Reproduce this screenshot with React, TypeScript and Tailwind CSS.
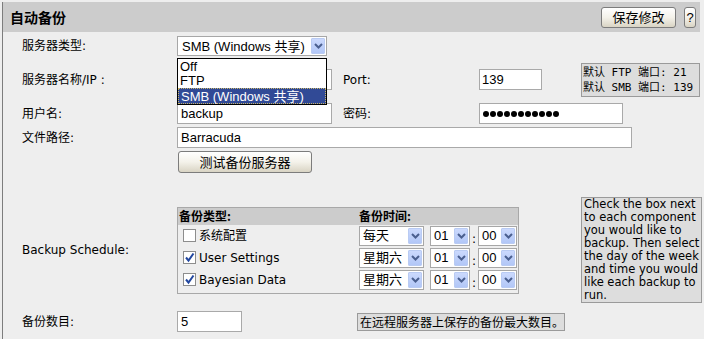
import React from "react";

const LBL = "font-['DejaVu_Sans','Noto_Sans_CJK_SC',sans-serif] text-[12px] text-black";
const INP = "font-['Liberation_Sans','Noto_Sans_CJK_SC',sans-serif] text-[13px] text-black";

function Chevron() {
  return (
    <svg width="9" height="6" viewBox="0 0 9 6">
      <path d="M1 1 L4.5 4.5 L8 1" stroke="#4a5f8f" strokeWidth="2" fill="none" />
    </svg>
  );
}

function Select({
  w,
  h,
  text,
  pl = "pl-[3px]",
}: {
  w: string;
  h: string;
  text: string;
  pl?: string;
}) {
  return (
    <div className={`${w} ${h} bg-white border border-[#a7a7a7] flex items-center justify-between pr-[1px] ${INP} leading-none`}>
      <span className={`${pl} whitespace-nowrap`}>{text}</span>
      <div className="w-[14px] h-[calc(100%-2px)] flex items-center justify-center bg-linear-to-b from-[#cbd9fd] to-[#b2c7f7] border border-[#b9cbf3] rounded-[1px]">
        <Chevron />
      </div>
    </div>
  );
}

function Input({ w, text, pl = "pl-[3px]" }: { w: string; text?: React.ReactNode; pl?: string }) {
  return (
    <div className={`${w} h-[21px] bg-white border border-[#a9a9a9] flex items-center ${pl} ${INP} leading-none`}>
      {text}
    </div>
  );
}

function Button({ w, h, children }: { w: string; h: string; children: React.ReactNode }) {
  return (
    <div
      className={`${w} ${h} flex items-center justify-center rounded-[3px] border border-[#7c7c7c] bg-linear-to-b from-[#ffffff] via-[#f4f2ea] to-[#d9d4c4] font-['Liberation_Sans','Noto_Sans_CJK_SC',sans-serif] text-[13px] text-black leading-none`}
    >
      {children}
    </div>
  );
}

function Checkbox({ checked }: { checked: boolean }) {
  return (
    <div className="w-[13px] h-[13px] bg-white border border-[#8d8d8d] flex items-center justify-center">
      {checked && (
        <svg width="11" height="11" viewBox="0 0 11 11">
          <path d="M2 5.5 L4.5 8.5 L9.5 1.5" stroke="#22479f" strokeWidth="2" fill="none" />
        </svg>
      )}
    </div>
  );
}

function Label({ children }: { children: React.ReactNode }) {
  return <div className={`w-[155px] shrink-0 ${LBL} whitespace-nowrap`}>{children}</div>;
}

function ScheduleRow({ checked, label, day }: { checked: boolean; label: string; day: string }) {
  return (
    <div className="h-[22px] flex items-center">
      <div className="w-[181px] flex items-center pl-[5px] gap-[3px]">
        <Checkbox checked={checked} />
        <span className={`${LBL} whitespace-nowrap`}>{label}</span>
      </div>
      <Select w="w-[65px]" h="h-[20px]" text={day} />
      <div className="w-[6px]" />
      <Select w="w-[40px]" h="h-[20px]" text="01" />
      <div className={`w-[8px] text-center ${LBL} self-end pb-[2px] leading-none`}>:</div>
      <Select w="w-[39px]" h="h-[20px]" text="00" />
    </div>
  );
}

export default function App() {
  return (
    <div className="w-[704px] h-[339px] bg-[#eeeeee] pt-[2px] pl-[2px] overflow-hidden">
      <div className="h-full border-l border-[#7d7d7d] flex flex-col">
        {/* header */}
        <div className="w-[697px] h-[30px] bg-[#cccccc] flex items-center justify-between pl-[7px] pr-[4px]">
          <div className="font-['Noto_Sans_CJK_SC',sans-serif] text-[14px] font-bold text-black">自动备份</div>
          <div className="flex items-center gap-[8px]">
            <Button w="w-[75px]" h="h-[21px]">保存修改</Button>
            <Button w="w-[12px]" h="h-[21px]">?</Button>
          </div>
        </div>

        <div className="pl-[19px] flex flex-col">
          {/* row 1 */}
          <div className="mt-[2px] h-[24px] flex items-center relative z-10">
            <Label>服务器类型:</Label>
            <div className="relative">
              <Select w="w-[150px]" h="h-[20px]" text="SMB (Windows 共享)" pl="pl-[4px]" />
              <div className={`absolute left-0 top-[22px] w-[150px] bg-white border border-black ${INP} leading-none`}>
                <div className="h-[14px] flex items-center pl-[2px]">Off</div>
                <div className="h-[15px] flex items-center pl-[2px]">FTP</div>
                <div className="h-[16px] flex items-center pl-[2px] bg-[#314a96] text-white border border-dotted border-[#c9b66a] whitespace-nowrap">
                  SMB (Windows 共享)
                </div>
              </div>
            </div>
          </div>

          {/* row 2 */}
          <div className="h-[43px] flex items-center">
            <Label>服务器名称/IP :</Label>
            <Input w="w-[155px]" />
            <div className={`ml-[11px] w-[136px] ${LBL}`}>Port:</div>
            <Input w="w-[63px]" text="139" pl="pl-[2px]" />
            <div className="ml-[39px] w-[119px] h-[34px] bg-[#dddddd] border border-[#9a9a9a] flex flex-col justify-center pl-[1px] font-['DejaVu_Sans_Mono','Noto_Sans_CJK_SC',monospace] text-[11px] leading-[15px] text-black whitespace-nowrap">
              <div>默认 FTP 端口: 21</div>
              <div>默认 SMB 端口: 139</div>
            </div>
          </div>

          {/* row 3 */}
          <div className="h-[25px] flex items-center">
            <Label>用户名:</Label>
            <Input w="w-[155px]" text="backup" />
            <div className={`ml-[11px] w-[136px] ${LBL}`}>密码:</div>
            <Input
              w="w-[144px]"
              pl="pl-[3px]"
              text={
                <div className="flex gap-[1px]">
                  {Array.from({ length: 11 }).map((_, i) => (
                    <div key={i} className="w-[6px] h-[6px] rounded-full bg-black" />
                  ))}
                </div>
              }
            />
          </div>

          {/* row 4 */}
          <div className="h-[23px] flex items-center">
            <Label>文件路径:</Label>
            <Input w="w-[455px]" text="Barracuda" />
          </div>

          {/* test button */}
          <div className="h-[26px] flex items-center">
            <div className="w-[156px]" />
            <Button w="w-[134px]" h="h-[22px]">测试备份服务器</Button>
          </div>

          {/* schedule */}
          <div className="mt-[20px] h-[110px] flex items-center">
            <Label>Backup Schedule:</Label>
            <div className="w-[342px] border border-[#a8a8a8] pb-[2px]">
              <div className="h-[17px] bg-[#cccccc] flex items-center font-['Noto_Sans_CJK_SC',sans-serif] text-[12px] font-bold text-black leading-none">
                <div className="w-[181px] pl-[1px]">备份类型:</div>
                <div>备份时间:</div>
              </div>
              <ScheduleRow checked={false} label="系统配置" day="每天" />
              <ScheduleRow checked={true} label="User Settings" day="星期六" />
              <ScheduleRow checked={true} label="Bayesian Data" day="星期六" />
            </div>
            <div className="ml-[62px] w-[121px] bg-[#dddddd] border border-[#9a9a9a] pl-[2px] font-['DejaVu_Sans',sans-serif] text-[11.5px] leading-[13px] text-black whitespace-nowrap">
              <div>Check the box next</div>
              <div>to each component</div>
              <div>you would like to</div>
              <div>backup. Then select</div>
              <div>the day of the week</div>
              <div>and time you would</div>
              <div>like each backup to</div>
              <div>run.</div>
            </div>
          </div>

          {/* last row */}
          <div className="h-[33px] flex items-center">
            <Label>备份数目:</Label>
            <Input w="w-[65px]" text="5" />
            <div className={`ml-[115px] w-[208px] h-[18px] bg-[#dddddd] border border-[#9a9a9a] flex items-center pl-[2px] font-['Noto_Sans_CJK_SC',sans-serif] text-[12px] text-black leading-none whitespace-nowrap`}>
              在远程服务器上保存的备份最大数目。
            </div>
          </div>
        </div>
      </div>
    </div>
  );
}
